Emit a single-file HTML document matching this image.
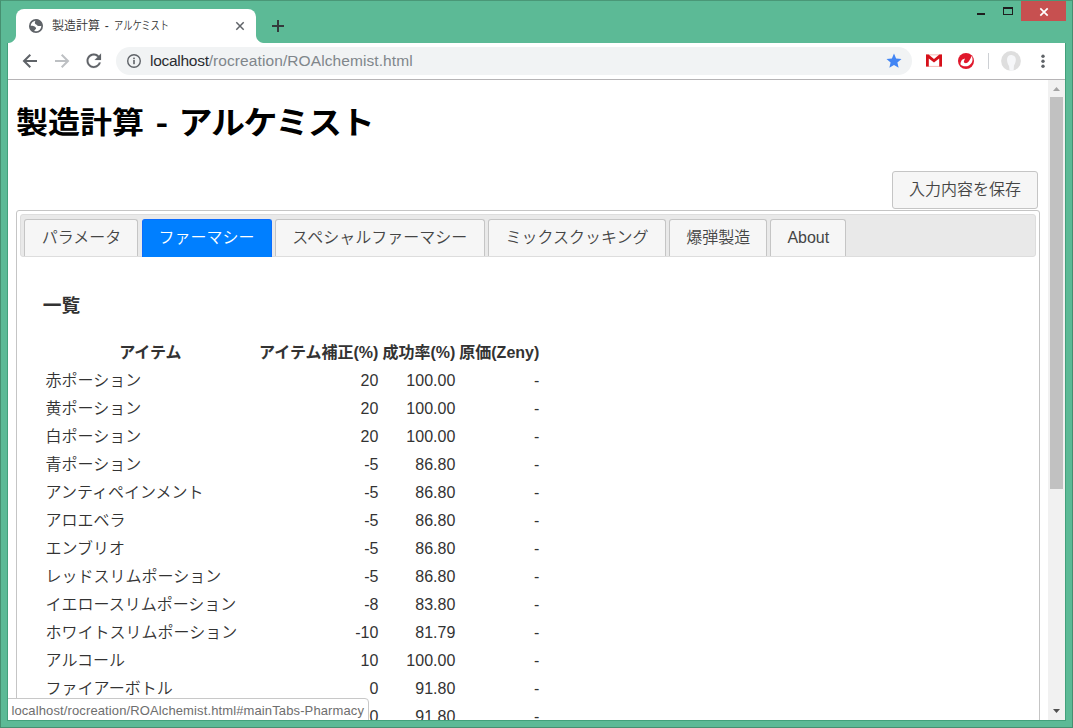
<!DOCTYPE html>
<html lang="ja">
<head>
<meta charset="utf-8">
<title>製造計算 - アルケミスト</title>
<style>
html,body{margin:0;padding:0;}
body{width:1073px;height:728px;overflow:hidden;background:#5cba96;font-family:"Liberation Sans","Noto Sans CJK JP",sans-serif;}
#win{position:relative;width:1073px;height:728px;background:#5cba96;overflow:hidden;}
.abs{position:absolute;}
/* window frame */
#frame-outer{left:0;top:0;width:1071px;height:726px;border:1px solid #468f70;border-top-color:#4a9777;}
#frame-inner{left:7px;top:43px;width:1057px;height:677px;border:1px solid #43a07b;border-top:none;}
/* tab strip */
#tab{left:16px;top:9px;width:240px;height:34px;background:#fff;border-radius:8px 8px 0 0;}
#tab-fl{left:8px;top:35px;width:8px;height:8px;background:radial-gradient(circle at 0 0,#5cba96 7.5px,#fff 8.5px);}
#tab-fr{left:256px;top:35px;width:8px;height:8px;background:radial-gradient(circle at 8px 0,#5cba96 7.5px,#fff 8.5px);}
#tab-title{font-weight:350;left:52px;top:17px;word-spacing:1.5px;font-size:12px;line-height:18px;color:#333;white-space:nowrap;font-family:"Liberation Sans","Noto Sans CJK JP",sans-serif;}
#tab-title .kana{display:inline-block;transform:scaleX(.77);transform-origin:0 50%;}
/* toolbar */
#toolbar{left:8px;top:43px;width:1057px;height:36px;background:#fff;}
#tb-line{left:8px;top:79px;width:1057px;height:1px;background:#b6b4b6;}
#omni{left:116px;top:47px;width:796px;height:28px;border-radius:14px;background:#f1f3f4;}
#url{left:150px;top:51px;font-size:15.5px;line-height:20px;white-space:nowrap;color:#80868b;font-family:"Liberation Sans",sans-serif;letter-spacing:.09px;}
#url b{font-weight:normal;color:#2a2c30;letter-spacing:-.28px;}
/* viewport */
#view{left:8px;top:80px;width:1057px;height:640px;background:#fff;overflow:hidden;}
#page{position:absolute;left:0;top:0;width:1040px;height:640px;color:#000;}
h1{position:absolute;left:8px;top:19.3px;transform:scaleY(.93);transform-origin:0 50%;margin:0;font-size:32px;line-height:46px;font-weight:bold;font-family:"Liberation Sans","Noto Sans CJK JP",sans-serif;white-space:nowrap;color:#000;}
h1 .dash{display:inline-block;width:36px;text-align:center;transform:translateY(-.6px) scale(1.15,1);}
h1 .kana{font-size:34px;letter-spacing:-1.3px;margin-left:-1.5px;position:relative;top:1px;}
#savebtn{font-weight:350;left:884px;top:91px;width:144px;height:36px;border:1px solid #c5c5c5;border-radius:3px;background:#f6f6f6;color:#454545;font-size:16px;line-height:36px;text-align:center;}
#tabs{left:8px;top:130px;width:1022px;height:600px;border:1px solid #c5c5c5;border-radius:3px;background:#fff;color:#333;}
#nav{left:3px;top:3px;width:1014px;height:41px;border:1px solid #ddd;border-radius:3px;background:#e9e9e9;}
.tb{font-weight:350;position:absolute;top:4px;height:37px;box-sizing:border-box;border:1px solid #c5c5c5;border-bottom:none;border-radius:3px 3px 0 0;background:#f6f6f6;color:#454545;font-size:16px;line-height:36px;text-align:center;white-space:nowrap;}
.tb.act{border-color:#0a6cff;background:#007fff;color:#fff;height:38px;}
h3{position:absolute;left:25.8px;top:81px;margin:0;font-size:18.72px;line-height:28px;font-weight:bold;font-family:"Liberation Sans","Noto Sans CJK JP",sans-serif;color:#333;}
table{position:absolute;left:25.6px;top:127px;border-collapse:separate;border-spacing:2px;font-size:16px;color:#333;}
td,th{padding:1px;line-height:24px;height:24px;white-space:nowrap;}
td{font-weight:350;}
th{font-weight:bold;text-align:center;}
td.n{text-align:right;}
/* scrollbar */
#sb{left:1040px;top:0;width:17px;height:640px;background:#f1f1f1;}
#sb-thumb{left:2px;top:17px;width:13px;height:392px;background:#c1c1c1;}
/* status bubble */
#status{left:-1px;top:618px;width:360px;height:24px;border:1px solid #c8c8c8;border-radius:0 4px 0 0;background:#fff;color:#6e6e6e;font-size:13px;line-height:23px;white-space:nowrap;font-family:"Liberation Sans",sans-serif;letter-spacing:.12px;}
#status span{position:absolute;left:3.4px;top:0;}
</style>
</head>
<body>
<div id="win">
  <div class="abs" id="tab"></div>
  <div class="abs" id="tab-fl"></div>
  <div class="abs" id="tab-fr"></div>
  <!-- favicon globe -->
  <svg class="abs" style="left:29px;top:19px" width="14" height="14" viewBox="0 0 14 14">
    <circle cx="7" cy="7" r="7" fill="#5f6368"/>
    <circle cx="7" cy="7" r="5.3" fill="#fff"/>
    <path d="M7 .5 C6.4 2 5.7 3 5.9 4.2 C6.1 5.2 7.2 5.3 7.8 5.9 C8.3 6.6 8.9 7.1 9.8 7 C11 6.9 12 6.6 13.5 6.7 C13.4 3 10.6 .4 7 .5 Z" fill="#5f6368"/>
    <path d="M.5 6.9 C2.4 6.8 3.8 7 5 7.3 C5.8 7.6 6.3 8.1 6.9 8.7 C7.4 9.3 6.9 10 6.3 10.4 C5.5 10.9 5.3 11.6 5 13.2 C2.3 12.4 .5 10 .5 6.9 Z" fill="#5f6368"/>
  </svg>
  <div class="abs" id="tab-title">製造計算 - <span class="kana">アルケミスト</span></div>
  <!-- tab close -->
  <svg class="abs" style="left:235px;top:21px" width="10" height="10" viewBox="0 0 10 10"><path d="M1.3 1.3 L8.7 8.7 M8.7 1.3 L1.3 8.7" stroke="#5f6368" stroke-width="1.5" fill="none"/></svg>
  <!-- new tab plus -->
  <svg class="abs" style="left:272px;top:20px" width="12" height="12" viewBox="0 0 12 12"><path d="M6 0 V12 M0 6 H12" stroke="#343a3c" stroke-width="2" fill="none"/></svg>
  <!-- window controls -->
  <div class="abs" style="left:977px;top:13px;width:8px;height:2px;background:#1e1e1e"></div>
  <div class="abs" style="left:1003px;top:7px;width:8px;height:5px;border:1px solid #1e1e1e;border-top-width:2px"></div>
  <div class="abs" style="left:1021px;top:1px;width:45px;height:20px;background:#c75050"></div>
  <svg class="abs" style="left:1039px;top:7px" width="10" height="10" viewBox="0 0 10 10"><path d="M1.3 1.3 L8.7 8.7 M8.7 1.3 L1.3 8.7" stroke="#fff" stroke-width="1.7" fill="none"/></svg>

  <div class="abs" id="toolbar"></div>
  <div class="abs" id="tb-line"></div>
  <!-- back -->
  <svg class="abs" style="left:20px;top:51px" width="20" height="20" viewBox="20 51 20 20"><path d="M37 61 H25 M30.3 54.7 L24 61 L30.3 67.3" stroke="#5f6368" stroke-width="2" fill="none"/></svg>
  <!-- forward -->
  <svg class="abs" style="left:52px;top:51px" width="20" height="20" viewBox="52 51 20 20"><path d="M55 61 H67 M61.7 54.7 L68 61 L61.7 67.3" stroke="#bdc0c3" stroke-width="2" fill="none"/></svg>
  <!-- reload -->
  <svg class="abs" style="left:83.3px;top:50.2px" width="21.6" height="21.6" viewBox="0 0 24 24"><path d="M17.65 6.35C16.2 4.9 14.21 4 12 4c-4.42 0-7.99 3.58-7.99 8s3.57 8 7.99 8c3.73 0 6.84-2.55 7.73-6h-2.08c-.82 2.33-3.04 4-5.65 4-3.31 0-6-2.69-6-6s2.69-6 6-6c1.66 0 3.14.69 4.22 1.78L13 11h7V4l-2.35 2.35z" fill="#5f6368" stroke="#5f6368" stroke-width=".2"/></svg>
  <div class="abs" id="omni"></div>
  <!-- info icon -->
  <svg class="abs" style="left:126px;top:53px" width="16" height="16" viewBox="0 0 16 16"><circle cx="8" cy="8" r="6.3" fill="none" stroke="#5f6368" stroke-width="1.4"/><rect x="7.2" y="7" width="1.6" height="4.2" fill="#5f6368"/><rect x="7.2" y="4.6" width="1.6" height="1.6" fill="#5f6368"/></svg>
  <div class="abs" id="url"><b>localhost</b>/rocreation/ROAlchemist.html</div>
  <!-- star -->
  <svg class="abs" style="left:885px;top:52px" width="18" height="18" viewBox="0 0 24 24"><path d="M12 17.27L18.18 21l-1.64-7.03L22 9.24l-7.19-.61L12 2 9.19 8.63 2 9.24l5.46 4.73L5.82 21z" fill="#4285f4"/></svg>
  <!-- gmail -->
  <svg class="abs" style="left:926px;top:54px" width="16" height="13" viewBox="0 0 16 13"><rect x="0.4" y="0.9" width="15.2" height="11.4" fill="#fff" stroke="#f3a5a0" stroke-width=".8"/><path d="M0 .6 H2.6 L8 5 L13.4 .6 H16 V12.4 H13.2 V4.6 L8 8.6 L2.8 4.6 V12.4 H0 Z" fill="#d6101a"/></svg>
  <!-- trend micro -->
  <svg class="abs" style="left:958px;top:53px" width="16" height="16" viewBox="0 0 16 16"><circle cx="8" cy="8" r="8" fill="#e0182c"/><path d="M13.7 3 C15.4 6.5 14.6 10.5 11 12.4 C8 13.9 4.2 13.4 2.4 11.2 C2.6 9.4 3.2 8 4 6.8 L7 5.6 L6 8 C5.6 9 6 9.8 7 10.1 C8.6 10.5 10.2 9.4 11.2 7.8 C12.2 6.2 12.9 4.6 13.7 3 Z" fill="#fff"/></svg>
  <div class="abs" style="left:988px;top:53px;width:1px;height:16px;background:#cdd0d4"></div>
  <!-- avatar -->
  <svg class="abs" style="left:1001px;top:51px" width="20" height="20" viewBox="0 0 20 20"><circle cx="10" cy="9.9" r="9.9" fill="#dedede"/><path d="M10.6 4 C8 3.6 6 5.6 6 8.6 C6 11.2 6.8 13.4 8 15 L8.6 19.6 C9.6 19.9 11 19.9 12.6 19.4 L13 14.4 C14.2 12.6 14.9 10.4 14.8 8.2 C14.7 5.8 13 4.2 10.6 4 Z" fill="#f6f7f9"/></svg>
  <!-- menu dots -->
  <svg class="abs" style="left:1041px;top:53px" width="4" height="16" viewBox="0 0 4 16"><circle cx="2" cy="3.2" r="1.7" fill="#5f6368"/><circle cx="2" cy="8.2" r="1.7" fill="#5f6368"/><circle cx="2" cy="13.2" r="1.7" fill="#5f6368"/></svg>

  <div class="abs" id="view">
    <div id="page">
      <h1>製造計算<span class="dash">-</span><span class="kana">アルケミスト</span></h1>
      <div class="abs" id="savebtn">入力内容を保存</div>
      <div class="abs" id="tabs">
        <div class="abs" id="nav">
          <div class="tb" style="left:3.4px;width:114px">パラメータ</div>
          <div class="tb act" style="left:120.6px;width:130px">ファーマシー</div>
          <div class="tb" style="left:253.8px;width:210px">スペシャルファーマシー</div>
          <div class="tb" style="left:467px;width:178px">ミックスクッキング</div>
          <div class="tb" style="left:648.2px;width:98px">爆弾製造</div>
          <div class="tb" style="left:749.4px;width:75.8px">About</div>
        </div>
        <h3>一覧</h3>
        <table>
          <tr><th style="width:209.5px">アイテム</th><th>アイテム補正(%)</th><th>成功率(%)</th><th>原価(Zeny)</th></tr>
          <tr><td>赤ポーション</td><td class="n">20</td><td class="n">100.00</td><td class="n">-</td></tr>
          <tr><td>黄ポーション</td><td class="n">20</td><td class="n">100.00</td><td class="n">-</td></tr>
          <tr><td>白ポーション</td><td class="n">20</td><td class="n">100.00</td><td class="n">-</td></tr>
          <tr><td>青ポーション</td><td class="n">-5</td><td class="n">86.80</td><td class="n">-</td></tr>
          <tr><td>アンティペインメント</td><td class="n">-5</td><td class="n">86.80</td><td class="n">-</td></tr>
          <tr><td>アロエベラ</td><td class="n">-5</td><td class="n">86.80</td><td class="n">-</td></tr>
          <tr><td>エンブリオ</td><td class="n">-5</td><td class="n">86.80</td><td class="n">-</td></tr>
          <tr><td>レッドスリムポーション</td><td class="n">-5</td><td class="n">86.80</td><td class="n">-</td></tr>
          <tr><td>イエロースリムポーション</td><td class="n">-8</td><td class="n">83.80</td><td class="n">-</td></tr>
          <tr><td>ホワイトスリムポーション</td><td class="n">-10</td><td class="n">81.79</td><td class="n">-</td></tr>
          <tr><td>アルコール</td><td class="n">10</td><td class="n">100.00</td><td class="n">-</td></tr>
          <tr><td>ファイアーボトル</td><td class="n">0</td><td class="n">91.80</td><td class="n">-</td></tr>
          <tr><td>アシッドボトル</td><td class="n">0</td><td class="n">91.80</td><td class="n">-</td></tr>
          <tr><td>プラントボトル</td><td class="n">0</td><td class="n">91.80</td><td class="n">-</td></tr>
        </table>
      </div>
    </div>
    <div class="abs" id="sb">
      <svg class="abs" style="left:5px;top:7px" width="7" height="4" viewBox="0 0 7 4"><path d="M0 4 L3.5 0 L7 4 Z" fill="#a3a3a3"/></svg>
      <div class="abs" id="sb-thumb"></div>
      <svg class="abs" style="left:5px;top:629px" width="7" height="4" viewBox="0 0 7 4"><path d="M0 0 L3.5 4 L7 0 Z" fill="#505050"/></svg>
    </div>
    <div class="abs" id="status"><span>localhost/rocreation/ROAlchemist.html#mainTabs-Pharmacy</span></div>
  </div>
  <div class="abs" id="frame-inner"></div>
  <div class="abs" id="frame-outer"></div>
</div>
</body>
</html>
